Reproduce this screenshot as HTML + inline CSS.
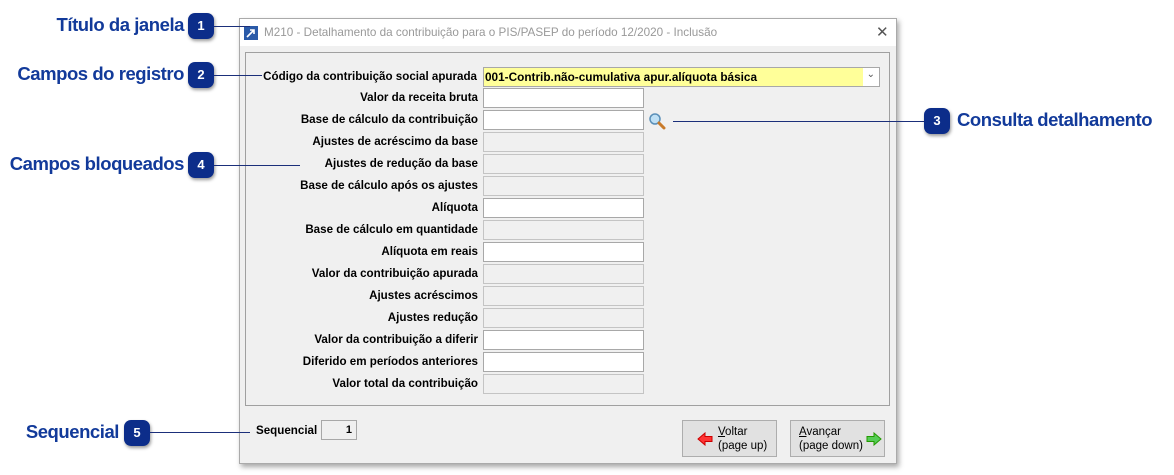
<!DOCTYPE html>
<html><head><meta charset="utf-8"><style>
body{margin:0;width:1174px;height:475px;background:#fff;position:relative;overflow:hidden;font-family:"Liberation Sans",sans-serif}
.ab{position:absolute}
.win{left:239px;top:18px;width:656px;height:444px;background:#f0f0f0;border:1px solid #aaa;box-shadow:2px 3px 5px rgba(0,0,0,.35)}
.title{left:0;top:0;width:656px;height:27px;background:#fff;font-size:11.7px;color:#999;line-height:27px}
.panel{left:5px;top:33px;width:645px;height:354px;border:1px solid #a0a0a0;box-sizing:border-box}
.lbl{position:absolute;right:412px;font-size:11.6px;font-weight:bold;color:#000;white-space:nowrap;height:20px;line-height:20px}
.in{position:absolute;left:238px;width:161px;height:20px;box-sizing:border-box;border:1px solid #a8a8a8;background:#fff}
.in.d{background:#f0f0f0;border-color:#c4c4c4}
.cal{position:absolute;font-family:"Liberation Sans",sans-serif;font-weight:bold;color:#123a9a;font-size:18.5px;letter-spacing:-0.45px;white-space:nowrap}
.bd{position:absolute;width:26px;height:26px;border-radius:7px;background:#0c2d8a;color:#fff;font:bold 13px "Liberation Sans",sans-serif;text-align:center;line-height:26px;box-shadow:1px 2px 3px rgba(0,0,0,.4)}
.ln{position:absolute;height:1px;background:#1b2f7a}
.btn{position:absolute;top:401px;width:95px;height:37px;box-sizing:border-box;border:1px solid #adadad;background:#e1e1e1;font-size:11.5px;line-height:14px}
</style></head><body>
<div class="ab win">
 <div class="ab title"><svg class="ab" style="left:4px;top:7px" width="14" height="14"><rect width="14" height="14" fill="#2a5aa8"/><path d="M3 11 L10 4 M6 4 H10 V8" stroke="#fff" stroke-width="1.6" fill="none"/></svg><span class="ab" style="left:24px">M210 - Detalhamento da contribuição para o PIS/PASEP do período 12/2020 - Inclusão</span><span class="ab" style="left:636px;top:0;font-size:15px;color:#555">✕</span></div>
 <div class="ab panel">
  <div class="lbl" style="top:14px">Código da contribuição social apurada</div>
  <div class="ab" style="left:237px;top:14px;width:397px;height:20px;box-sizing:border-box;border:1px solid #a8a8a8;background:#fff"><div class="ab" style="left:0;top:0;width:378px;height:18px;background:#ffff99;font-size:11.8px;font-weight:bold;line-height:18px;padding-left:1px">001-Contrib.não-cumulativa apur.alíquota básica</div><span class="ab" style="right:4px;top:1px;font-size:10px;color:#555">&#8964;</span></div>
 </div>
 <div class="ab" style="left:5px;top:33px;width:645px;height:354px">
  <div class="lbl" style="top:36px">Valor da receita bruta</div><div class="in" style="top:36px"></div>
  <div class="lbl" style="top:58px">Base de cálculo da contribuição</div><div class="in" style="top:58px"></div>
  <div class="lbl" style="top:80px">Ajustes de acréscimo da base</div><div class="in d" style="top:80px"></div>
  <div class="lbl" style="top:102px">Ajustes de redução da base</div><div class="in d" style="top:102px"></div>
  <div class="lbl" style="top:124px">Base de cálculo após os ajustes</div><div class="in d" style="top:124px"></div>
  <div class="lbl" style="top:146px">Alíquota</div><div class="in" style="top:146px"></div>
  <div class="lbl" style="top:168px">Base de cálculo em quantidade</div><div class="in d" style="top:168px"></div>
  <div class="lbl" style="top:190px">Alíquota em reais</div><div class="in" style="top:190px"></div>
  <div class="lbl" style="top:212px">Valor da contribuição apurada</div><div class="in d" style="top:212px"></div>
  <div class="lbl" style="top:234px">Ajustes acréscimos</div><div class="in d" style="top:234px"></div>
  <div class="lbl" style="top:256px">Ajustes redução</div><div class="in d" style="top:256px"></div>
  <div class="lbl" style="top:278px">Valor da contribuição a diferir</div><div class="in" style="top:278px"></div>
  <div class="lbl" style="top:300px">Diferido em períodos anteriores</div><div class="in" style="top:300px"></div>
  <div class="lbl" style="top:322px">Valor total da contribuição</div><div class="in d" style="top:322px"></div>
  <svg class="ab" style="left:403px;top:60px" width="18" height="18"><circle cx="7" cy="7" r="5" fill="#bfe0f5" stroke="#5a8fb8" stroke-width="1.5"/><path d="M11 11 L16 16" stroke="#c87a2a" stroke-width="3" stroke-linecap="round"/></svg>
 </div>
 <div class="ab" style="left:16px;top:405px;font-size:11.6px;font-weight:bold">Sequencial</div>
 <div class="ab" style="left:81px;top:401px;width:36px;height:20px;box-sizing:border-box;border:1px solid #a8a8a8;font-size:11px;font-weight:bold;text-align:right;padding-right:4px;line-height:18px">1</div>
 <div class="btn" style="left:442px"><svg class="ab" style="left:14px;top:11px" width="16" height="14"><path d="M1 7 L8 1 V4.5 H15 V9.5 H8 V13 Z" fill="#f33" stroke="#c00"/></svg><span class="ab" style="left:35px;top:4px"><u>V</u>oltar<br>(page up)</span></div>
 <div class="btn" style="left:550px"><span class="ab" style="left:8px;top:4px"><u>A</u>vançar<br>(page down)</span><svg class="ab" style="left:75px;top:11px" width="16" height="14"><path d="M15 7 L8 1 V4.5 H1 V9.5 H8 V13 Z" fill="#5c5" stroke="#290"/></svg></div>
</div>

<div class="cal" style="right:990px;top:14px">Título da janela</div><div class="bd" style="left:188px;top:13px">1</div><div class="ln" style="left:214px;top:26px;width:36px"></div>
<div class="cal" style="right:990px;top:63px">Campos do registro</div><div class="bd" style="left:188px;top:62px">2</div><div class="ln" style="left:214px;top:75px;width:48px"></div>
<div class="ln" style="left:673px;top:121px;width:251px"></div><div class="bd" style="left:924px;top:108px">3</div><div class="cal" style="left:957px;top:109px">Consulta detalhamento</div>
<div class="cal" style="right:990px;top:153px">Campos bloqueados</div><div class="bd" style="left:188px;top:152px">4</div><div class="ln" style="left:214px;top:165px;width:86px"></div>
<div class="cal" style="right:1055px;top:421px">Sequencial</div><div class="bd" style="left:124px;top:420px">5</div><div class="ln" style="left:150px;top:432px;width:100px"></div>
</body></html>
